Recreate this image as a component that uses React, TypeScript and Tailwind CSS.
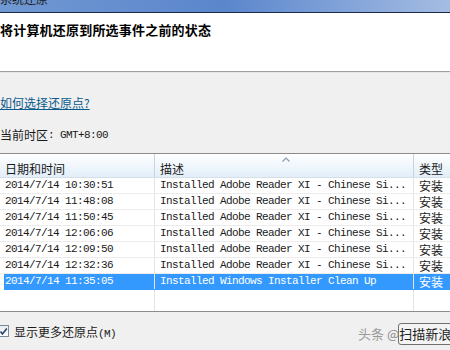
import React from "react";

const cjk = { fontFamily: '"Noto Sans CJK SC", "Noto Sans", sans-serif' };
const mono = { fontFamily: '"Liberation Mono", "Noto Sans CJK SC", monospace', fontSize: "11px", letterSpacing: "-0.6px" };

const rows = [
  { d: "2014/7/14 10:30:51", t: "Installed Adobe Reader XI - Chinese Si..." },
  { d: "2014/7/14 11:48:08", t: "Installed Adobe Reader XI - Chinese Si..." },
  { d: "2014/7/14 11:50:45", t: "Installed Adobe Reader XI - Chinese Si..." },
  { d: "2014/7/14 12:06:06", t: "Installed Adobe Reader XI - Chinese Si..." },
  { d: "2014/7/14 12:09:50", t: "Installed Adobe Reader XI - Chinese Si..." },
  { d: "2014/7/14 12:32:36", t: "Installed Adobe Reader XI - Chinese Si..." },
  { d: "2014/7/14 11:35:05", t: "Installed Windows Installer Clean Up", sel: true },
];

export default function App() {
  return (
    <div className="w-[450px] h-[350px] overflow-hidden bg-[#f0f0f0] flex flex-col" style={cjk}>
      {/* title bar */}
      <div className="h-[12px] overflow-hidden bg-gradient-to-r from-[#7098d2] via-[#5b86cc] to-[#a4bce2] flex-none">
        <div className="-mt-[9px] text-[12px] leading-[16px] text-[#1a1a1a]">系统还原</div>
      </div>
      <div className="h-[1px] bg-[#1c2c4c] flex-none" />
      {/* white header area */}
      <div className="h-[58px] bg-white flex-none pt-[9px]">
        <div className="text-[13px] font-bold leading-[16px] text-black tracking-[0.2px]">将计算机还原到所选事件之前的状态</div>
      </div>
      <div className="h-[1px] bg-[#a0a0a0] flex-none" />
      <div className="h-[1px] bg-[#e6e6e6] flex-none" />
      {/* link */}
      <div className="pt-[16px] h-[55px] flex-none">
        <span className="text-[12px] leading-[16px] text-[#0a5a8c] underline">如何选择还原点?</span>
      </div>
      <div className="h-[25px] flex-none flex items-start text-[12px] leading-[14px] text-[#1a1a1a]">
        <span>当前时区</span>
        <span style={{ ...mono, fontFamily: '"Liberation Mono", monospace' }}>: GMT+8:00</span>
      </div>
      {/* table */}
      <div className="flex-none h-[159px] border-t border-b border-[#8c8c8c] bg-white flex flex-col">
        <div className="h-[24px] flex-none flex border-b border-[#d5dfe8] bg-gradient-to-b from-white to-[#e2eef9] relative text-[12px] text-[#1a1a1a]">
          <div className="w-[155px] flex-none border-r border-[#c6d3e0] pl-[5px] pt-[8px] leading-[14px]">日期和时间</div>
          <div className="w-[259px] flex-none border-r border-[#c6d3e0] pl-[5px] pt-[8px] leading-[14px] relative">
            描述
            <svg className="absolute left-[127px] top-[3px]" width="8" height="5" viewBox="0 0 8 5">
              <path d="M0.5 4.5 L4 1 L7.5 4.5" fill="none" stroke="#8a9bb0" strokeWidth="1.2" />
            </svg>
          </div>
          <div className="flex-1 pl-[5px] pt-[8px] leading-[14px]">类型</div>
        </div>
        {rows.map((r, i) => (
          <div
            key={i}
            className={
              "h-[16px] flex-none flex border-b " +
              (r.sel ? "bg-[#3399ff] border-[#3399ff] text-white ml-[4px]" : "border-[#ececec] text-[#1a1a1a]")
            }
          >
            <div className={(r.sel ? "w-[151px] pl-[1px]" : "w-[155px] pl-[5px]") + " flex-none border-r border-[#e3e3e3] leading-[15px] whitespace-nowrap overflow-hidden"} style={mono}>
              {r.d}
            </div>
            <div className="w-[259px] flex-none border-r border-[#e3e3e3] pl-[5px] leading-[15px] whitespace-nowrap overflow-hidden" style={mono}>
              {r.t}
            </div>
            <div className="flex-1 pl-[5px] text-[12px] leading-[15px]">安装</div>
          </div>
        ))}
        <div className="flex-1 flex">
          <div className="w-[155px] flex-none border-r border-[#e3e3e3]" />
          <div className="w-[259px] flex-none border-r border-[#e3e3e3]" />
          <div className="flex-1" />
        </div>
      </div>
      {/* bottom */}
      <div className="flex-1 flex items-start pt-[13px] relative">
        <div className="w-[11px] h-[12px] -ml-[2px] border border-[#7a8a9a] bg-gradient-to-b from-[#e8ecf0] to-white flex items-center justify-center">
          <svg width="9" height="9" viewBox="0 0 9 9">
            <path d="M1.5 4.5 L3.5 7 L7.8 1.5" fill="none" stroke="#2a3f6a" strokeWidth="1.6" />
          </svg>
        </div>
        <span className="ml-[5px] text-[12px] leading-[14px] text-[#1a1a1a]">
          显示更多还原点<span style={{ ...mono, fontFamily: '"Liberation Mono", monospace' }}>(M)</span>
        </span>
        <div className="absolute left-[398px] top-[11px] w-[70px] h-[22px] border border-[#707070] rounded-[3px] bg-[#f4f4f4]" />
        <div className="absolute left-[358px] top-[13px] text-[13px] leading-[18px] whitespace-nowrap">
          <span className="text-[#9a9a9a]">头条 </span>
          <span className="text-[#8a8a8a]">@</span>
          <span className="text-[#222]">扫描新浪的</span>
        </div>
      </div>
    </div>
  );
}
